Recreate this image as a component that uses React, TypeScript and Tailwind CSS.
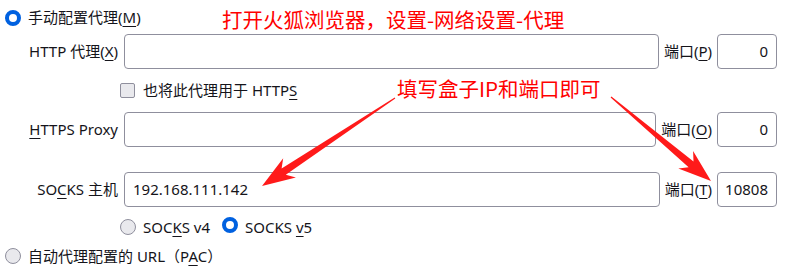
import React from "react";

const FONT = { fontFamily: '"Noto Sans", "Noto Sans CJK SC", sans-serif' };
const RED_FONT = { fontFamily: '"Noto Sans CJK SC", "Noto Sans", sans-serif' };

function U({ children }: { children: React.ReactNode }) {
  return <span className="underline underline-offset-[3px] decoration-1">{children}</span>;
}

function Radio({ checked }: { checked?: boolean }) {
  if (checked) {
    return (
      <span className="inline-block w-4 h-4 rounded-full border-[4px] border-[#0061e0] bg-white shrink-0" />
    );
  }
  return (
    <span className="inline-block w-4 h-4 rounded-full border border-[#8f8f9d] bg-[#e9e9ed] shrink-0" />
  );
}

function TextInput({ value, right }: { value?: string; right?: boolean }) {
  return (
    <div
      className={`h-[35px] border border-[#8f8f9d] rounded-[4px] bg-white flex items-center px-[8px] text-[15px] text-[#15141a] ${
        right ? "justify-end" : ""
      }`}
    >
      {value}
    </div>
  );
}

function arrowPoints(x1: number, y1: number, x2: number, y2: number) {
  const len = Math.hypot(x2 - x1, y2 - y1);
  const dx = (x2 - x1) / len;
  const dy = (y2 - y1) / len;
  const nx = -dy;
  const ny = dx;
  const headLen = 33;
  const notch = 7;
  const headW = 11.5;
  const shaftW = 3.8;
  const tailW = 0.6;
  const bx = x2 - dx * headLen;
  const by = y2 - dy * headLen;
  const sx = x2 - dx * (headLen - notch);
  const sy = y2 - dy * (headLen - notch);
  const pts = [
    [x1 + nx * tailW, y1 + ny * tailW],
    [sx + nx * shaftW, sy + ny * shaftW],
    [bx + nx * headW, by + ny * headW],
    [x2, y2],
    [bx - nx * headW, by - ny * headW],
    [sx - nx * shaftW, sy - ny * shaftW],
    [x1 - nx * tailW, y1 - ny * tailW],
  ];
  return pts.map((p) => `${p[0].toFixed(1)},${p[1].toFixed(1)}`).join(" ");
}

export default function App() {
  return (
    <div className="relative w-[786px] h-[269px] bg-white overflow-hidden text-[#15141a] text-[15px]" style={FONT}>
      <div className="flex flex-col">
        {/* Row 1 */}
        <div className="h-[34px] flex items-center pl-[5px] gap-[7px] pt-[1px]">
          <Radio checked />
          <span>
            手动配置代理(<U>M</U>)
          </span>
        </div>

        {/* HTTP row */}
        <div className="flex items-center h-[35px] pr-[9px]">
          <div className="w-[118px] text-right shrink-0">
            HTTP 代理(<U>X</U>)
          </div>
          <div className="flex-1 ml-[6px]">
            <TextInput />
          </div>
          <div className="ml-[5px] shrink-0">
            端口(<U>P</U>)
          </div>
          <div className="w-[60px] ml-[5px] shrink-0">
            <TextInput value="0" right />
          </div>
        </div>

        {/* checkbox row */}
        <div className="h-[43px] flex items-center pl-[120px] gap-[8px]">
          <span className="inline-block w-[15px] h-[15px] rounded-[2px] border border-[#8f8f9d] bg-[#e9e9ed]" />
          <span>
            也将此代理用于 HTTP<U>S</U>
          </span>
        </div>

        {/* HTTPS row */}
        <div className="flex items-center h-[35px] pr-[9px]">
          <div className="w-[118px] text-right shrink-0">
            <U>H</U>TTPS Proxy
          </div>
          <div className="flex-1 ml-[6px]">
            <TextInput />
          </div>
          <div className="ml-[5px] shrink-0">
            端口(<U>O</U>)
          </div>
          <div className="w-[60px] ml-[5px] shrink-0">
            <TextInput value="0" right />
          </div>
        </div>

        <div className="h-[25px]" />

        {/* SOCKS row */}
        <div className="flex items-center h-[35px] pr-[9px]">
          <div className="w-[118px] text-right shrink-0">
            SO<U>C</U>KS 主机
          </div>
          <div className="flex-1 ml-[6px]">
            <TextInput value="192.168.111.142" />
          </div>
          <div className="ml-[5px] shrink-0">
            端口(<U>T</U>)
          </div>
          <div className="w-[60px] ml-[5px] shrink-0">
            <TextInput value="10808" right />
          </div>
        </div>

        {/* socks version */}
        <div className="h-[40px] flex items-center pl-[120px]">
          <Radio />
          <span className="ml-[7px]">
            SOC<U>K</U>S v4
          </span>
          <span className="ml-[12px]">
            <Radio checked />
          </span>
          <span className="ml-[7px]">
            SOCKS <U>v</U>5
          </span>
        </div>

        {/* PAC row */}
        <div className="h-[18px] flex items-center pl-[5px] gap-[7px]">
          <Radio />
          <span>
            自动代理配置的 URL（P<U>A</U>C）
          </span>
        </div>
      </div>

      {/* annotations */}
      <div className="absolute left-[222px] top-[5px] text-[20.5px] leading-[29px] text-[#ff0000]" style={RED_FONT}>
        打开火狐浏览器，设置-网络设置-代理
      </div>
      <div className="absolute left-[397px] top-[74px] text-[20.5px] leading-[29px] text-[#ff0000]" style={RED_FONT}>
        填写盒子IP和端口即可
      </div>
      <svg className="absolute left-0 top-0 pointer-events-none" width="786" height="269">
        <polygon points={arrowPoints(395, 98, 262, 186)} fill="#ff1a1a" />
        <polygon points={arrowPoints(611, 97, 711, 181)} fill="#ff1a1a" />
      </svg>
    </div>
  );
}
